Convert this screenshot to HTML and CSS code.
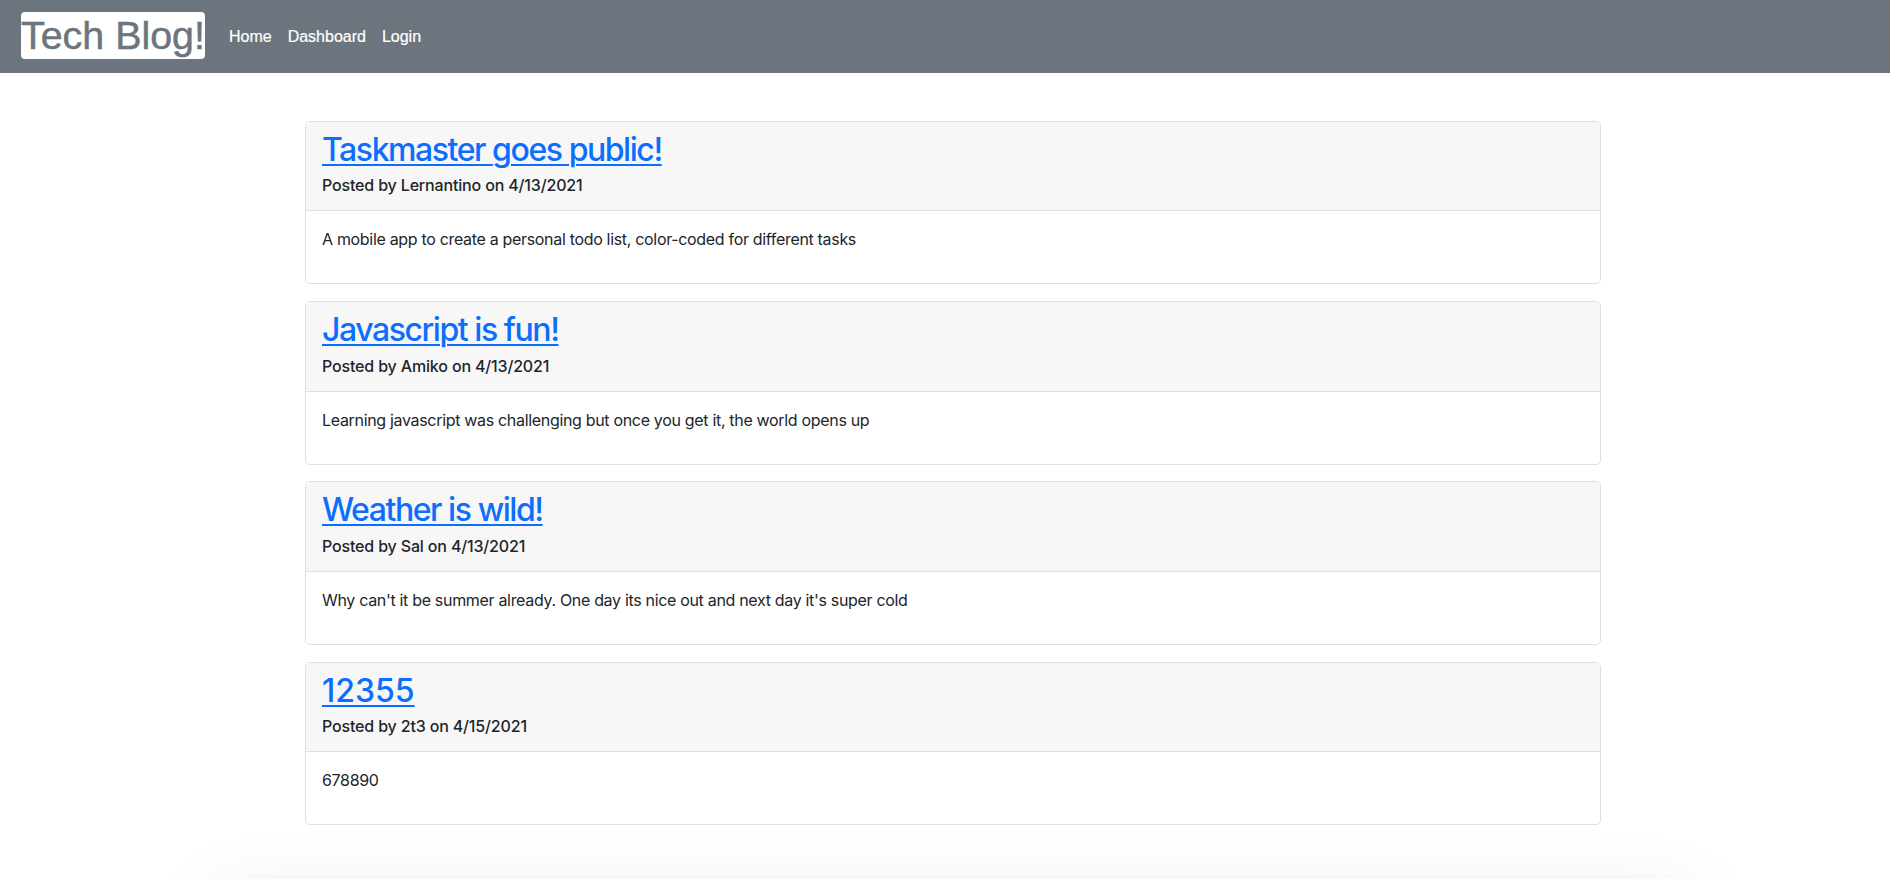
FILE: index.html
```html
<!DOCTYPE html>
<html lang="en">
<head>
<meta charset="utf-8">
<title>Tech Blog!</title>
<link rel="stylesheet" href="styles.css">
</head>
<body>
<nav class="topbar">
  <h1 class="brand">Tech Blog!</h1>
  <div class="nav-links">
    <a class="nav-link" href="#">Home</a>
    <a class="nav-link" href="#">Dashboard</a>
    <a class="nav-link" href="#">Login</a>
  </div>
</nav>
<main class="page">
  <div class="posts">
    <article class="card">
      <header class="card-header">
        <h2 class="post-title"><a href="#">Taskmaster goes public!</a></h2>
        <p class="post-meta">Posted by Lernantino on 4/13/2021</p>
      </header>
      <div class="card-body"><p>A mobile app to create a personal todo list, color-coded for different tasks</p></div>
    </article>
    <article class="card">
      <header class="card-header">
        <h2 class="post-title"><a href="#">Javascript is fun!</a></h2>
        <p class="post-meta">Posted by Amiko on 4/13/2021</p>
      </header>
      <div class="card-body"><p>Learning javascript was challenging but once you get it, the world opens up</p></div>
    </article>
    <article class="card">
      <header class="card-header">
        <h2 class="post-title"><a href="#">Weather is wild!</a></h2>
        <p class="post-meta">Posted by Sal on 4/13/2021</p>
      </header>
      <div class="card-body"><p>Why can't it be summer already. One day its nice out and next day it's super cold</p></div>
    </article>
    <article class="card">
      <header class="card-header">
        <h2 class="post-title post-title--numeric"><a href="#">12355</a></h2>
        <p class="post-meta">Posted by 2t3 on 4/15/2021</p>
      </header>
      <div class="card-body"><p>678890</p></div>
    </article>
  </div>
  <footer class="site-footer"></footer>
</main>
</body>
</html>
```
FILE: styles.css
```css
html, body {
  margin: 0;
  padding: 0;
}
html {
  overflow: hidden;
}
body {
  background: #fff;
  color: #212529;
  font-family: Inter, "Liberation Sans", sans-serif;
  font-size: 16px;
  line-height: 1.5;
}

.topbar {
  display: flex;
  align-items: flex-start;
  height: 73px;
  box-sizing: border-box;
  padding: 12px 0 0 21px;
  background: #6c757d;
}
.brand {
  margin: 0 16px 0 0;
  background: #fff;
  color: #6c757d;
  font-family: "Liberation Sans", Arial, sans-serif;
  font-weight: 400;
  font-size: 39.4px;
  line-height: 47px;
  border-radius: 4px;
  -webkit-text-stroke: 0.5px #6c757d;
}
.nav-links {
  display: flex;
  margin-top: 12.5px;
}
.nav-link {
  padding: 0 8px;
  color: #fff;
  text-decoration: none;
  font-family: "Liberation Sans", Arial, sans-serif;
  font-size: 16px;
  line-height: 24px;
  -webkit-text-stroke: 0.2px #fff;
}

.page {
  padding: 48px 0 0 16px;
}
.posts {
  max-width: 1296px;
  margin: 0 auto;
  display: flex;
  flex-direction: column;
  gap: 16.8px;
}
.card {
  border: 1px solid #dfdfdf;
  border-radius: 5px;
  overflow: hidden;
  background: #fff;
}
.card-header {
  background: #f7f7f7;
  border-bottom: 1px solid #dfdfdf;
  padding: 9px 16px 13px;
}
.post-title {
  margin: 0 0 4px;
  font-size: 32px;
  font-weight: 500;
  line-height: 1.2;
  letter-spacing: -0.045em;
}
.post-title--numeric {
  letter-spacing: 0;
}
.post-title a {
  color: #0d6efd;
  text-decoration: underline;
  text-decoration-thickness: 2px;
  text-underline-offset: 3px;
}
.post-meta {
  margin: 0;
  font-weight: 500;
  letter-spacing: -0.01em;
}
.card-body {
  padding: 16px;
}
.card-body p {
  margin: 0 0 16px;
  letter-spacing: -0.02em;
}

.site-footer {
  max-width: 1480px;
  height: 80px;
  margin: 80px auto 0;
  background: #fff;
  box-shadow: 0 0 80px rgba(0, 0, 0, 0.12);
}
```
